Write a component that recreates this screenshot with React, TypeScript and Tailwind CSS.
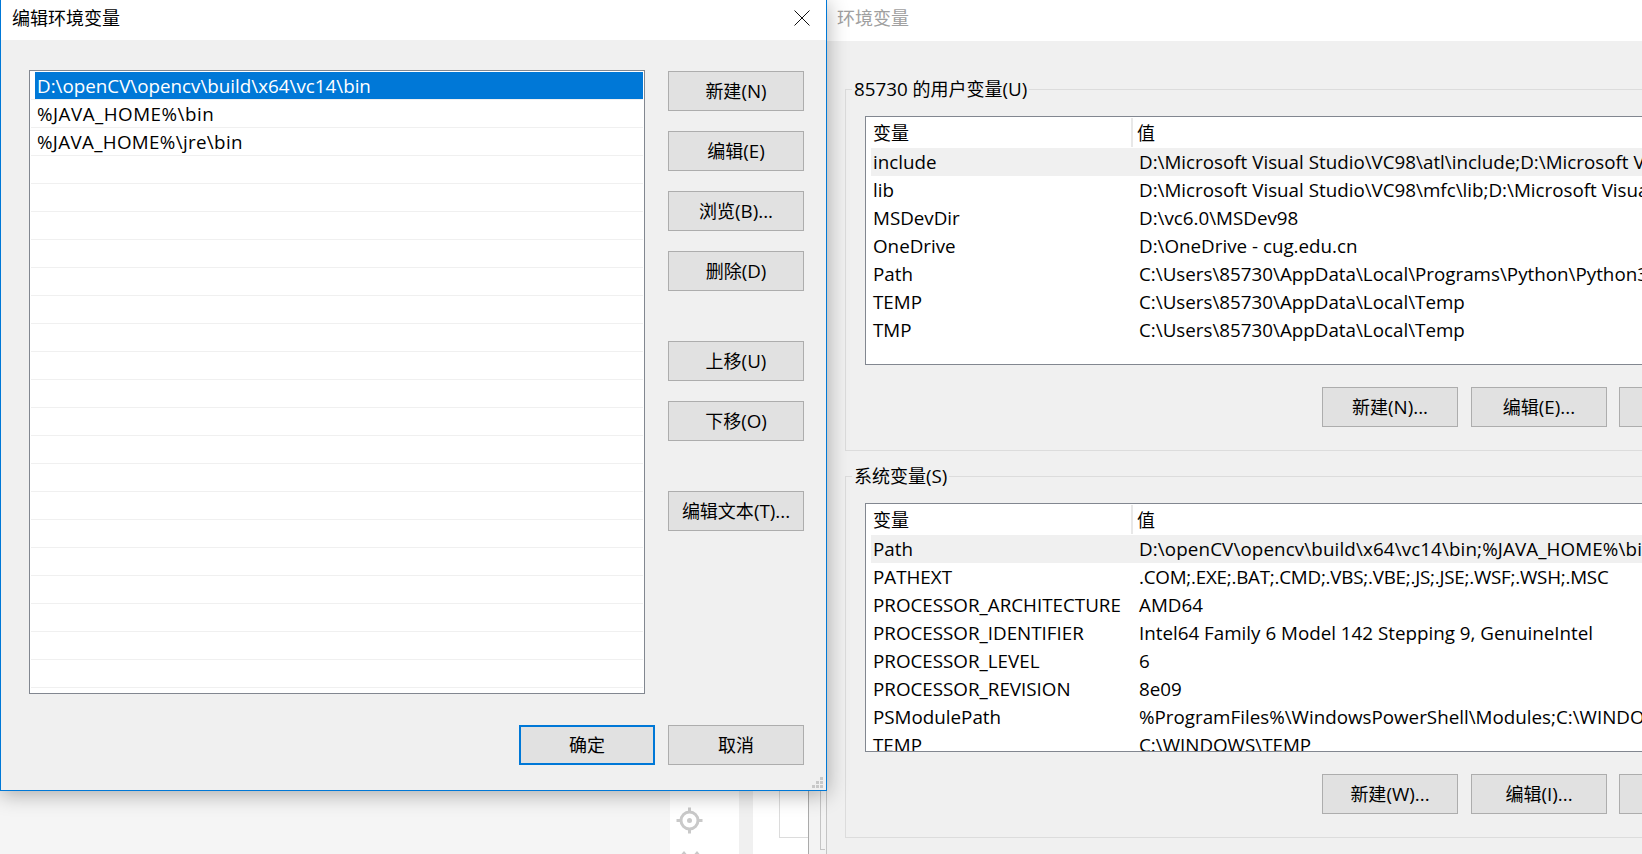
import React from "react";

const FONT = "[font-family:'Open_Sans','Noto_Sans_CJK_SC',sans-serif]";

function T({ s, cls = "" }: { s: string; cls?: string }) {
  const parts = s.split(/([\x00-\x7f]+)/).filter(Boolean);
  return (
    <span className={`whitespace-pre ${cls}`}>
      {parts.map((p, i) =>
        /^[\x00-\x7f]/.test(p) ? (
          <span key={i} className="text-[18.8px]">{p}</span>
        ) : (
          <span key={i}>{p}</span>
        ),
      )}
    </span>
  );
}

function Btn({ label, className = "" }: { label?: string; className?: string }) {
  return (
    <div className={`flex h-10 w-[136px] shrink-0 items-center justify-center bg-[#e1e1e1] text-[18px] text-black ${className || "border border-[#adadad]"}`}>
      {label ? <T s={label} /> : null}
    </div>
  );
}

function Row({ a, b, sel, cls }: { a: string; b: string; sel?: boolean; cls?: string }) {
  return (
    <div className={`flex h-7 items-center whitespace-nowrap ${sel ? "bg-[#f0f0f0]" : ""}`}>
      <div className="w-[261px] shrink-0 pl-[2px]"><T s={a} /></div>
      <div className="pl-[7px]"><T s={b} cls={cls} /></div>
    </div>
  );
}

type R = { a: string; b: string; cls?: string };

function Group({ label, rows, b1, b2, mt }: { label: string; rows: R[]; b1: string; b2: string; mt: string }) {
  return (
    <div className={`relative h-[362px] w-[900px] shrink-0 border border-[#dcdcdc] ${mt}`}>
      <div className="absolute -top-[15px] left-[6px] bg-[#f0f0f0] px-[2px] leading-7 text-black"><T s={label} /></div>
      <div className="ml-[19px] mt-[26px] h-[249px] overflow-hidden border border-[#828790] bg-white pl-[5px]">
        <div className="flex h-[31px] items-center">
          <div className="flex h-[29px] w-[262px] shrink-0 items-center border-r-2 border-[#e8e8e8] pl-[2px] pt-[2px]">变量</div>
          <div className="pl-[4px] pt-[2px]">值</div>
        </div>
        {rows.map((r, i) => <Row key={r.a} a={r.a} b={r.b} cls={r.cls} sel={i === 0} />)}
      </div>
      <div className="ml-[476px] mt-[22px] flex gap-[13px]">
        <Btn label={b1} />
        <Btn label={b2} />
        <Btn className="-ml-px border border-[#adadad]" />
      </div>
    </div>
  );
}

export default function App() {
  const blanks = Array.from({ length: 20 });
  const user: R[] = [
    { a: "include", b: "D:\\Microsoft Visual Studio\\VC98\\atl\\include;D:\\Microsoft V" },
    { a: "lib", b: "D:\\Microsoft Visual Studio\\VC98\\mfc\\lib;D:\\Microsoft Visua" },
    { a: "MSDevDir", b: "D:\\vc6.0\\MSDev98" },
    { a: "OneDrive", b: "D:\\OneDrive - cug.edu.cn" },
    { a: "Path", b: "C:\\Users\\85730\\AppData\\Local\\Programs\\Python\\Python3" },
    { a: "TEMP", b: "C:\\Users\\85730\\AppData\\Local\\Temp" },
    { a: "TMP", b: "C:\\Users\\85730\\AppData\\Local\\Temp" },
  ];
  const sys: R[] = [
    { a: "Path", b: "D:\\openCV\\opencv\\build\\x64\\vc14\\bin;%JAVA_HOME%\\bi", cls: "tracking-[0.12px]" },
    { a: "PATHEXT", b: ".COM;.EXE;.BAT;.CMD;.VBS;.VBE;.JS;.JSE;.WSF;.WSH;.MSC", cls: "tracking-[-0.23px]" },
    { a: "PROCESSOR_ARCHITECTURE", b: "AMD64" },
    { a: "PROCESSOR_IDENTIFIER", b: "Intel64 Family 6 Model 142 Stepping 9, GenuineIntel" },
    { a: "PROCESSOR_LEVEL", b: "6" },
    { a: "PROCESSOR_REVISION", b: "8e09" },
    { a: "PSModulePath", b: "%ProgramFiles%\\WindowsPowerShell\\Modules;C:\\WINDOW" },
    { a: "TEMP", b: "C:\\WINDOWS\\TEMP" },
  ];
  return (
    <div className={`flex h-[854px] w-[1642px] overflow-hidden bg-[#f5f5f5] text-[18px] text-black ${FONT}`}>
      <div className="relative z-10 flex w-[827px] shrink-0 flex-col">
        <div className="relative z-10 h-[791px] shrink-0 border-x border-b border-[#0078d7] bg-[#f0f0f0] shadow-[0_3px_20px_rgba(0,0,0,0.32)]">
          <div className="flex h-10 items-center justify-between bg-white pl-[11px] pr-[16px]">
            <span className="mb-[4px]">编辑环境变量</span>
            <svg width="16" height="16" viewBox="0 0 16 16" className="mb-[4px]" fill="none" stroke="#111" strokeWidth="1">
              <path d="M0.5 0.5L15.5 15.5M15.5 0.5L0.5 15.5" />
            </svg>
          </div>
          <div className="flex pl-[28px] pt-[30px]">
            <div className="h-[624px] w-[616px] shrink-0 overflow-hidden border border-[#828790] bg-white">
              <div className="ml-[5px] mr-px mt-[1px] flex h-[27px] items-center bg-[#0078d7] pl-[2px] pt-[1px] text-white"><T s="D:\openCV\opencv\build\x64\vc14\bin" /></div>
              <div className="mx-px flex h-7 items-center border-t border-[#f0f0f0] pl-[6px] pt-[1px]"><T s="%JAVA_HOME%\bin" cls="tracking-[0.5px]" /></div>
              <div className="mx-px flex h-7 items-center border-t border-[#f0f0f0] pl-[6px] pt-[1px]"><T s="%JAVA_HOME%\jre\bin" cls="tracking-[0.33px]" /></div>
              {blanks.map((_, i) => <div key={i} className="mx-px h-7 border-t border-[#f0f0f0]" />)}
            </div>
            <div className="ml-[23px] flex flex-col pt-[1px]">
              <Btn label="新建(N)" />
              <Btn label="编辑(E)" className="mt-5 border border-[#adadad]" />
              <Btn label="浏览(B)..." className="mt-5 border border-[#adadad]" />
              <Btn label="删除(D)" className="mt-5 border border-[#adadad]" />
              <Btn label="上移(U)" className="mt-[50px] border border-[#adadad]" />
              <Btn label="下移(O)" className="mt-5 border border-[#adadad]" />
              <Btn label="编辑文本(T)..." className="mt-[50px] border border-[#adadad]" />
            </div>
          </div>
          <div className="mt-[31px] flex justify-end gap-[13px] pr-[22px]">
            <Btn label="确定" className="border-2 border-[#0078d7]" />
            <Btn label="取消" />
          </div>
          <svg width="12" height="12" viewBox="0 0 12 12" className="absolute bottom-px right-[2px]" fill="#c8c8c8">
            <rect x="8" y="0" width="3" height="3" /><rect x="4" y="4" width="3" height="3" /><rect x="8" y="4" width="3" height="3" />
            <rect x="0" y="8" width="3" height="3" /><rect x="4" y="8" width="3" height="3" /><rect x="8" y="8" width="3" height="3" />
          </svg>
        </div>
        <div className="flex min-h-0 flex-1 overflow-hidden">
          <div className="w-[670px] shrink-0" />
          <div className="flex w-[69px] shrink-0 flex-col items-start gap-[16px] bg-white pl-[6px] pt-[16px]">
            <svg width="27" height="27" viewBox="0 0 27 27" className="shrink-0" fill="none" stroke="#c9c9c9" strokeWidth="3">
              <circle cx="13.5" cy="13.5" r="8.5" />
              <path d="M13.5 0.5V6M13.5 21V26.5M0.5 13.5H6M21 13.5H26.5" />
              <circle cx="13.5" cy="13.5" r="2.5" fill="#c9c9c9" stroke="none" />
            </svg>
            <svg width="25" height="10" viewBox="0 0 25 10" className="ml-[2px] shrink-0" fill="#c9c9c9">
              <path d="M0 8L6 1L12 8ZM13 8L19 1L25 8Z" />
            </svg>
          </div>
          <div className="w-[14px] shrink-0 bg-[#f0f0f0]" />
          <div className="flex flex-1 bg-white pl-[26px]">
            <div className="h-[47px] w-[29px] shrink-0 border-b border-l border-[#dcdcdc]" />
            <div className="flex-1 border-l border-r border-l-[#aaaaaa] border-r-[#c4c4c4] bg-[#f3f3f3] pl-[11px]">
              <div className="h-[59px] w-[5px] border-b border-l border-[#c4c4c4]" />
            </div>
          </div>
        </div>
      </div>
      <div className="flex min-w-0 flex-1 flex-col overflow-hidden bg-[#f0f0f0]">
        <div className="flex h-[41px] shrink-0 items-center bg-white pb-[5px] pl-[10px] text-[#a0a0a0]">环境变量</div>
        <div className="flex flex-col pl-[18px] pt-[48px]">
          <Group label="85730 的用户变量(U)" rows={user} b1="新建(N)..." b2="编辑(E)..." mt="" />
          <Group label="系统变量(S)" rows={sys} b1="新建(W)..." b2="编辑(I)..." mt="mt-[25px]" />
        </div>
      </div>
    </div>
  );
}
